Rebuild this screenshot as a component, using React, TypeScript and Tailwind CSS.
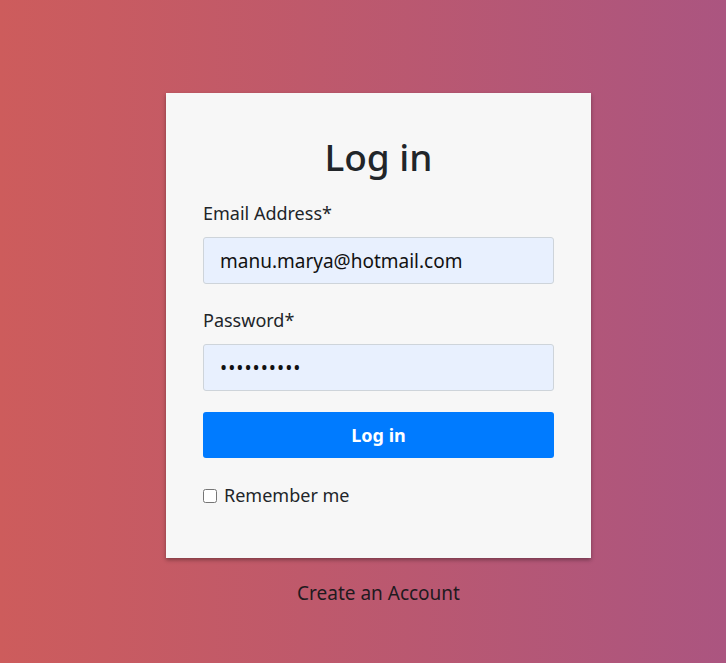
export default function App() {
  return (
    <div
      className="min-h-[663px] w-full bg-[linear-gradient(to_right,#cd5c5c,#ab5580)] pt-[93px]"
      style={{ fontFamily: '"Noto Sans", "Open Sans", sans-serif' }}
    >
      <div className="ml-[166px] w-[425px]">
        {/* Card */}
        <div className="bg-[#f7f7f7] px-[37px] pt-[37px] pb-[49px] shadow-[0_2px_4px_rgba(0,0,0,0.35)]">
          <h1 className="text-center text-[37px] font-medium leading-[54px] text-[#212529]">Log in</h1>

          <form className="mt-[16px]" onSubmit={(e) => e.preventDefault()}>
            <label className="block text-[18px] leading-[27px] text-[#212529]">Email Address*</label>
            <input
              type="email"
              defaultValue="manu.marya@hotmail.com"
              className="mt-[10px] block h-[47px] w-full rounded-[3px] border border-[#ced4da] bg-[#e8f0fe] px-[16px] text-[19px] text-[#111] outline-none"
            />

            <label className="mt-[23px] block text-[18px] leading-[27px] text-[#212529]">Password*</label>
            <input
              type="password"
              defaultValue="manumarya1"
              className="mt-[10px] block h-[47px] w-full rounded-[3px] border border-[#ced4da] bg-[#e8f0fe] px-[16px] text-[19px] tracking-[1px] text-[#111] outline-none"
            />

            <button
              type="submit"
              className="mt-[21px] block h-[46px] w-full rounded-[3px] bg-[#007bff] text-[18px] font-bold text-white"
            >
              Log in
            </button>

            <label className="mt-[24px] flex items-center gap-[7px] text-[18px] leading-[27px] text-[#212529]">
              <input type="checkbox" className="h-[14px] w-[14px]" />
              Remember me
            </label>
          </form>
        </div>

        <div className="mt-[22px] text-center text-[19px] leading-[27px] text-[#1f1a1e]">Create an Account</div>
      </div>
    </div>
  );
}
